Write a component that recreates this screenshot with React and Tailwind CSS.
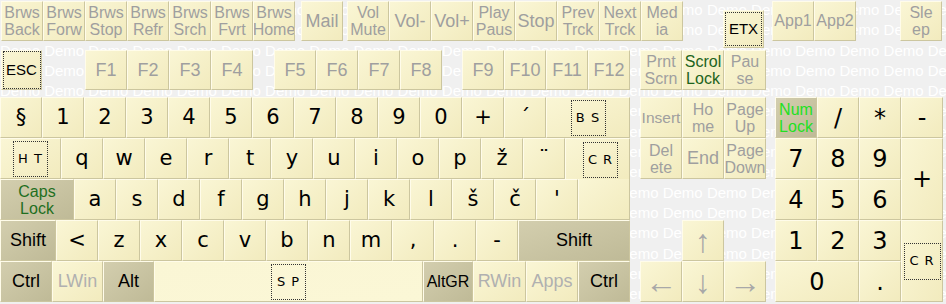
import React from "react";
import clsx from "clsx";

const SANS = "font-['Liberation_Sans',Arial,sans-serif]";
const VERA = "font-['DejaVu_Sans',Verdana,sans-serif]";

const gray = clsx(SANS, "text-[#9f9f9f]");
const small = clsx(gray, "text-[16px] leading-[17px]");
const big = clsx(gray, "text-[18px]");
const letter = clsx(VERA, "text-[21px] text-black");
const mod = clsx(SANS, "text-[18px] text-black");
const pad = clsx(VERA, "text-[24px] text-black");
const arrow = clsx(SANS, "text-[32px] leading-none text-[#a8a8a8]");

const Key = ({ w = "w-[42px]", h = "h-[41px]", dark, className, children }) => (
  <div
    className={clsx(
      "flex shrink-0 flex-col items-center justify-center overflow-hidden whitespace-nowrap border border-t-[#fffcea] border-l-[#fffcea] border-r-[#ccc69f] border-b-[#ccc69f] text-center",
      dark
        ? "bg-linear-to-br from-[#d3ceae] to-[#bfba97]"
        : "bg-linear-to-br from-[#faf6d5] to-[#f2ebbe]",
      w,
      h,
      className
    )}
  >
    {children}
  </div>
);

// dotted focus-like box used for control codes
const Dotted = ({ className, children }) => (
  <div
    className={clsx(
      "flex items-center justify-center border border-dotted border-[#333] text-black",
      className
    )}
  >
    {children}
  </div>
);

const Code = ({ children, className }) => (
  <Dotted className={clsx("h-[36px] w-[35px] text-[13px] tracking-[1px]", VERA, className)}>
    {children}
  </Dotted>
);

const Two = ({ a, b }) => (
  <>
    <span>{a}</span>
    <span>{b}</span>
  </>
);

const browser = ["Back", "Forw", "Stop", "Refr", "Srch", "Fvrt", "Home"];
const media = [
  ["Vol", "Mute"],
  ["Vol-"],
  ["Vol+"],
  ["Play", "Paus"],
  ["Stop"],
  ["Prev", "Trck"],
  ["Next", "Trck"],
  ["Med", "ia"],
];

const rowA = ["§", "1", "2", "3", "4", "5", "6", "7", "8", "9", "0", "+", "´"];
const rowB = ["q", "w", "e", "r", "t", "y", "u", "i", "o", "p", "ž", "¨"];
const rowC = ["a", "s", "d", "f", "g", "h", "j", "k", "l", "š", "č", "'"];
const rowD = ["<", "z", "x", "c", "v", "b", "n", "m", ",", ".", "-"];

const Watermark = () => (
  <div
    aria-hidden
    className={clsx(
      "pointer-events-none absolute inset-0 select-none overflow-hidden whitespace-nowrap text-[15px] leading-[20.3px] text-[#ffffff]",
      SANS
    )}
  >
    {Array.from({ length: 16 }).map((_, i) => (
      <div key={i}>{"Demo ".repeat(24)}</div>
    ))}
  </div>
);

export default function App() {
  return (
    <div className="relative h-[304px] w-[946px] overflow-hidden bg-[#f0f0f0]">
      <Watermark />

      <div className="relative">
        {/* media / browser row */}
        <div className="flex h-[50px] items-start pl-[1px] pt-[1px]">
          {browser.map((b) => (
            <Key key={b} h="h-[40px]" className={small}>
              <Two a="Brws" b={b} />
            </Key>
          ))}
          <Key h="h-[40px]" className={clsx(big, "ml-[6px]")}>
            Mail
          </Key>
          <div className="ml-[4px] flex">
            {media.map(([a, b]) => (
              <Key key={a + b} h="h-[40px]" className={b ? small : big}>
                {b ? <Two a={a} b={b} /> : a}
              </Key>
            ))}
          </div>
          <Key w="w-[41px]" h="h-[38px]" className="ml-[40px] mt-[9px]">
            <Dotted className={clsx("h-[34px] w-[37px] text-[15px]", SANS)}>ETX</Dotted>
          </Key>
          <Key h="h-[40px]" className={clsx(gray, "ml-[8px] text-[16px]")}>
            App1
          </Key>
          <Key h="h-[40px]" className={clsx(gray, "text-[16px]")}>
            App2
          </Key>
          <Key h="h-[40px]" className={clsx(small, "ml-[44px]")}>
            <Two a="Sle" b="ep" />
          </Key>
        </div>

        {/* function row */}
        <div className="flex h-[47px] items-start pl-[1px]">
          <Key w="w-[41px]" h="h-[40px]">
            <Dotted className={clsx("h-[38px] w-[38px] text-[15px]", SANS)}>ESC</Dotted>
          </Key>
          <div className="ml-[43px] flex">
            {["F1", "F2", "F3", "F4"].map((f) => (
              <Key key={f} h="h-[40px]" className={big}>
                {f}
              </Key>
            ))}
          </div>
          <div className="ml-[21px] flex">
            {["F5", "F6", "F7", "F8"].map((f) => (
              <Key key={f} h="h-[40px]" className={big}>
                {f}
              </Key>
            ))}
          </div>
          <div className="ml-[20px] flex">
            {["F9", "F10", "F11", "F12"].map((f) => (
              <Key key={f} h="h-[40px]" className={big}>
                {f}
              </Key>
            ))}
          </div>
          <div className="ml-[10px] flex">
            <Key h="h-[40px]" className={small}>
              <Two a="Prnt" b="Scrn" />
            </Key>
            <Key h="h-[40px]" className={clsx(SANS, "text-[16px] leading-[17px] text-[#1d641d]")}>
              <Two a="Scrol" b="Lock" />
            </Key>
            <Key h="h-[40px]" className={small}>
              <Two a="Pau" b="se" />
            </Key>
          </div>
        </div>

        {/* main block + nav + numpad */}
        <div className="flex">
          <div className="flex w-[630px] flex-col">
            <div className="flex">
              {rowA.map((k) => (
                <Key key={k} className={letter}>
                  {k}
                </Key>
              ))}
              <Key w="w-[84px]">
                <Code className="h-[35px]">B S</Code>
              </Key>
            </div>
            <div className="flex">
              <Key w="w-[61px]">
                <Code>H T</Code>
              </Key>
              {rowB.map((k) => (
                <Key key={k} className={letter}>
                  {k}
                </Key>
              ))}
              <Key w="w-[65px]" className="border-b-0 pt-[1px]">
                <Code className="ml-[6px]">C R</Code>
              </Key>
            </div>
            <div className="flex">
              <Key w="w-[74px]" dark className={clsx(SANS, "text-[16px] leading-[17px] text-[#1f6f1f]")}>
                <Two a="Caps" b="Lock" />
              </Key>
              {rowC.map((k) => (
                <Key key={k} className={letter}>
                  {k}
                </Key>
              ))}
              <Key w="w-[52px]" className="border-t-0" />
            </div>
            <div className="flex">
              <Key w="w-[56px]" dark className={mod}>
                Shift
              </Key>
              {rowD.map((k) => (
                <Key key={k} className={letter}>
                  {k}
                </Key>
              ))}
              <Key w="w-[112px]" dark className={mod}>
                Shift
              </Key>
            </div>
            <div className="flex">
              <Key w="w-[52px]" dark className={mod}>
                Ctrl
              </Key>
              <Key w="w-[51px]" className={clsx(SANS, "text-[18px] text-[#b0b0b0]")}>
                LWin
              </Key>
              <Key w="w-[51px]" dark className={mod}>
                Alt
              </Key>
              <Key w="w-[269px]" className="from-[#f4eec4] to-[#fbf7d6]">
                <Code className="h-[35px]">S P</Code>
              </Key>
              <Key w="w-[50px]" dark className={clsx(SANS, "text-[16px] text-black")}>
                AltGR
              </Key>
              <Key w="w-[53px]" className={clsx(SANS, "text-[18px] text-[#b0b0b0]")}>
                RWin
              </Key>
              <Key w="w-[52px]" className={clsx(SANS, "text-[18px] text-[#b0b0b0]")}>
                Apps
              </Key>
              <Key w="w-[52px]" dark className={mod}>
                Ctrl
              </Key>
            </div>
          </div>

          {/* navigation cluster */}
          <div className="ml-[10px] flex w-[126px] flex-col">
            <div className="flex">
              <Key className={clsx(gray, "text-[15.5px]")}>Insert</Key>
              <Key className={small}>
                <Two a="Ho" b="me" />
              </Key>
              <Key className={small}>
                <Two a="Page" b="Up" />
              </Key>
            </div>
            <div className="flex">
              <Key className={small}>
                <Two a="Del" b="ete" />
              </Key>
              <Key className={big}>End</Key>
              <Key className={small}>
                <Two a="Page" b="Down" />
              </Key>
            </div>
            <div className="h-[41px]" />
            <div className="flex pl-[42px]">
              <Key className={arrow}>↑</Key>
            </div>
            <div className="flex">
              <Key className={arrow}>←</Key>
              <Key className={arrow}>↓</Key>
              <Key className={arrow}>→</Key>
            </div>
          </div>

          {/* numpad */}
          <div className="ml-[9px] grid grid-cols-[repeat(4,42px)] grid-rows-[repeat(5,41px)]">
            <Key w="" h="" dark className={clsx(SANS, "text-[16px] leading-[17px] text-[#22e022]")}>
              <Two a="Num" b="Lock" />
            </Key>
            <Key w="" h="" className={pad}>/</Key>
            <Key w="" h="" className={clsx(pad, "text-[22px]")}>*</Key>
            <Key w="" h="" className={clsx(pad, "text-[20px]")}>-</Key>
            <Key w="" h="" className={pad}>7</Key>
            <Key w="" h="" className={pad}>8</Key>
            <Key w="" h="" className={pad}>9</Key>
            <Key w="" h="" className={clsx(pad, "row-span-2")}>+</Key>
            <Key w="" h="" className={pad}>4</Key>
            <Key w="" h="" className={pad}>5</Key>
            <Key w="" h="" className={pad}>6</Key>
            <Key w="" h="" className={pad}>1</Key>
            <Key w="" h="" className={pad}>2</Key>
            <Key w="" h="" className={pad}>3</Key>
            <Key w="" h="" className="row-span-2">
              <Code className="h-[37px] w-[37px]">C R</Code>
            </Key>
            <Key w="" h="" className={clsx(pad, "col-span-2")}>0</Key>
            <Key w="" h="" className={pad}>.</Key>
          </div>
        </div>
      </div>
    </div>
  );
}
